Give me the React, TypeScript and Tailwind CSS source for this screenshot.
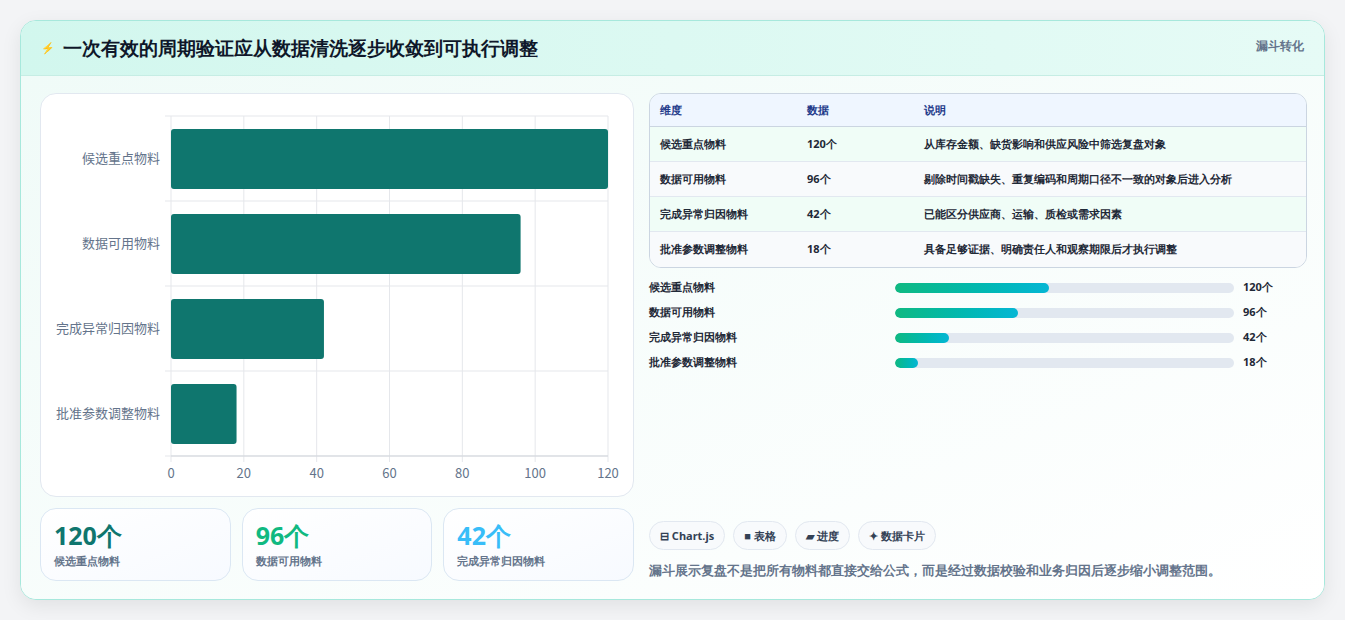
const cats = [
  { n: "候选重点物料", v: 120, d: "从库存金额、缺货影响和供应风险中筛选复盘对象" },
  { n: "数据可用物料", v: 96, d: "剔除时间戳缺失、重复编码和周期口径不一致的对象后进入分析" },
  { n: "完成异常归因物料", v: 42, d: "已能区分供应商、运输、质检或需求因素" },
  { n: "批准参数调整物料", v: 18, d: "具备足够证据、明确责任人和观察期限后才执行调整" },
];

function Chart() {
  const x0 = 130, x1 = 567, y0 = 22, y1 = 362;
  const sx = (v: number) => x0 + ((x1 - x0) * v) / 120;
  const ticks = [0, 20, 40, 60, 80, 100, 120];
  return (
    <svg width="593" height="403" className="block">
      {ticks.map((t) => (
        <line key={t} x1={sx(t)} x2={sx(t)} y1={y0} y2={y1 + 6} stroke="#e5e7eb" />
      ))}
      {[0, 1, 2, 3, 4].map((i) => (
        <line key={i} x1={x0 - 6} x2={x1} y1={y0 + i * 85} y2={y0 + i * 85} stroke="#e5e7eb" />
      ))}
      <line x1={x0} x2={x1} y1={y1} y2={y1} stroke="#d1d5db" />
      {cats.map((c, i) => (
        <g key={c.n}>
          <rect x={x0} y={y0 + i * 85 + 13} width={sx(c.v) - x0} height={60} rx="3" fill="#0f766e" />
          <text x={x0 - 11} y={y0 + i * 85 + 47} textAnchor="end" fontSize="13" fill="#64748b" fontFamily="'Noto Sans CJK SC', sans-serif">{c.n}</text>
        </g>
      ))}
      {ticks.map((t) => (
        <text key={t} x={sx(t)} y={y1 + 22} textAnchor="middle" fontSize="13" fill="#64748b" fontFamily="'Noto Sans CJK SC', sans-serif">{t}</text>
      ))}
    </svg>
  );
}

export default function App() {
  const stats = [
    { v: "120个", l: "候选重点物料", c: "text-[#0f766e]" },
    { v: "96个", l: "数据可用物料", c: "text-[#10b981]" },
    { v: "42个", l: "完成异常归因物料", c: "text-[#38bdf8]" },
  ];
  return (
    <div className="w-[1345px] h-[620px] bg-[#f3f4f6] pt-5 pl-5 font-['Noto_Sans_CJK_SC',sans-serif]">
      <div className="w-[1305px] h-[580px] rounded-2xl border border-[#a7e8dc] bg-white overflow-hidden shadow-[0_6px_20px_rgba(0,0,0,0.08)] flex flex-col">
        <div className="h-[55px] shrink-0 bg-gradient-to-r from-[#d2f7ee] to-[#e6fbf6] border-b border-[#c6ede4] flex items-start justify-between px-5">
          <div className="flex items-center gap-2 mt-[13px]">
            <span className="text-[#3b82f6] text-[11px]">⚡</span>
            <h1 className="text-[19px] font-bold text-[#0f172a] leading-[28px]">一次有效的周期验证应从数据清洗逐步收敛到可执行调整</h1>
          </div>
          <div className="mt-[16px] text-[12px] font-bold text-[#64748b]">漏斗转化</div>
        </div>
        <div className="flex-1 flex gap-[15px] pl-[19px] pt-[17px] bg-gradient-to-br from-[#f0fbf8] to-white">
          <div className="w-[594px] flex flex-col gap-[11px]">
            <div className="h-[404px] rounded-2xl border border-[#e2e8f0] bg-white"><Chart /></div>
            <div className="grid grid-cols-3 gap-[11px]">
              {stats.map((s) => (
                <div key={s.l} className="h-[73px] rounded-2xl border border-[#dbe7f3] bg-gradient-to-br from-white to-[#f7faff] px-[13px] pt-[10px]">
                  <div className={`text-[25px] font-bold leading-[32px] ${s.c}`}>{s.v}</div>
                  <div className="text-[11px] font-bold text-[#64748b] mt-[2px]">{s.l}</div>
                </div>
              ))}
            </div>
          </div>
          <div className="w-[658px] flex flex-col">
            <div className="rounded-xl border border-[#cbd5e1] overflow-hidden text-[11px] font-bold">
              <div className="flex h-[33px] items-center bg-[#eff6ff] text-[#1e3a8a] border-b border-[#cbd5e1]">
                <div className="w-[157px] pl-[10px]">维度</div>
                <div className="w-[117px]">数据</div>
                <div>说明</div>
              </div>
              {cats.map((c, i) => (
                <div key={c.n} className={`flex h-[35px] items-center text-[#1f2937] ${i < 3 ? "border-b border-[#e2e8f0]" : ""} ${i % 2 === 0 ? "bg-[#f0fdf7]" : "bg-[#f8fafc]"}`}>
                  <div className="w-[157px] pl-[10px]">{c.n}</div>
                  <div className="w-[117px]">{c.v}个</div>
                  <div>{c.d}</div>
                </div>
              ))}
            </div>
            <div className="mt-[11px] flex flex-col gap-[8px]">
              {cats.map((c) => (
                <div key={c.n} className="flex items-center h-[17px] text-[11px] font-bold text-[#1f2937]">
                  <div className="w-[246px]">{c.n}</div>
                  <div className="w-[339px] h-[10px] rounded-full bg-[#e2e8f0] overflow-hidden">
                    <div className="h-full rounded-full bg-gradient-to-r from-[#10b981] to-[#06b6d4]" style={{ width: `${(c.v / 120) * 45.5}%` }} />
                  </div>
                  <div className="ml-[9px]">{c.v}个</div>
                </div>
              ))}
            </div>
            <div className="mt-auto mb-[18px]">
              <div className="flex gap-[8px]">
                {["⊟ Chart.js", "■ 表格", "▰ 进度", "✦ 数据卡片"].map((t) => (
                  <span key={t} className="h-[29px] px-[10px] rounded-full border border-[#e2e8f0] bg-[#f8fafc] flex items-center text-[11px] font-bold text-[#334155]">{t}</span>
                ))}
              </div>
              <p className="mt-[12px] text-[12.5px] font-bold text-[#64748b]">漏斗展示复盘不是把所有物料都直接交给公式，而是经过数据校验和业务归因后逐步缩小调整范围。</p>
            </div>
          </div>
        </div>
      </div>
    </div>
  );
}
